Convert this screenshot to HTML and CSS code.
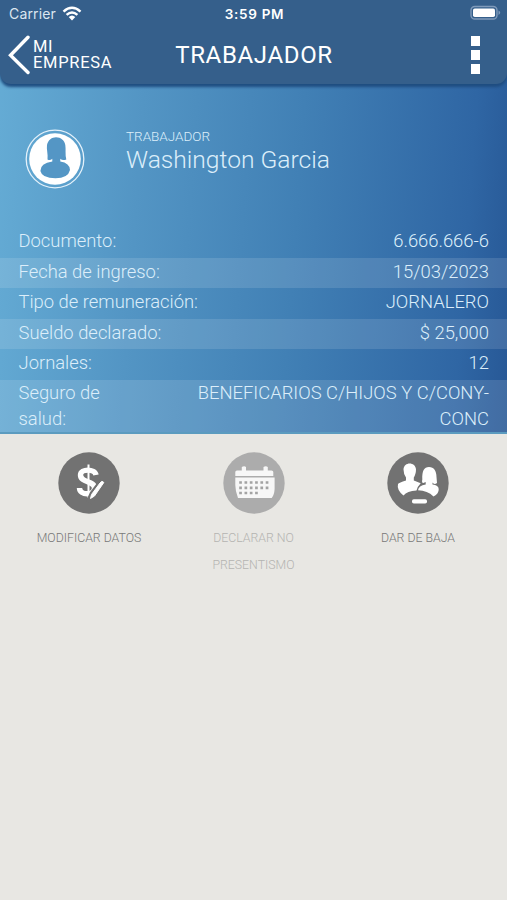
FILE: index.html
```html
<!DOCTYPE html>
<html lang="es">
<head>
<meta charset="utf-8">
<meta name="viewport" content="width=device-width, initial-scale=1">
<title>Trabajador</title>
<link rel="stylesheet" href="styles.css">
</head>
<body>
<div class="top">
<header class="appbar">
  <div class="status">
    <div class="network"><span class="carrier">Carrier</span>
      <svg class="wifi" width="20" height="15" viewBox="0 0 20 15"><g fill="none" stroke="#fff" stroke-width="2.5"><path d="M1.5 5.6Q10-2 18.500 5.600"/><path d="M4.600 8.900Q10 4 15.400 8.900"/></g><path d="M6.700 11.100Q10 8 13.300 11.100L10 14.500Z" fill="#fff"/></svg>
    </div>
    <time class="clock">3:59 PM</time>
    <svg class="battery" width="32" height="16" viewBox="0 0 32 16"><rect x="1" y="1.500" width="26" height="12.500" rx="3.800" fill="none" stroke="#7f9aba" stroke-width="1.400"/><rect x="3" y="3.500" width="22" height="8.500" rx="1.800" fill="#fff"/><path d="M28.500 5.500Q32 7.700 28.500 10Z" fill="#7f9aba"/></svg>
  </div>
  <nav class="nav">
    <a class="back"><svg width="22" height="40" viewBox="0 0 22 40"><path d="M20 2.300L2.500 20.300L20 37.500" fill="none" stroke="#fff" stroke-width="3.400" stroke-linecap="round"/></svg><span>MI<br>EMPRESA</span></a>
    <h1>TRABAJADOR</h1>
    <div class="more"><i></i><i></i><i></i></div>
  </nav>
</header>
<section class="panel">
  <div class="person">
    <svg class="avatar" width="60" height="60" viewBox="0 0 60 60"><circle cx="30" cy="30" r="28.800" fill="none" stroke="#e4f1fa" stroke-width="1.300"/><circle cx="30" cy="30" r="25.800" fill="#fff"/><path d="M22.500 30.500C23.200 25 21.300 20 22 16C23 11 27 8.300 31 8.300C36 8.300 39.500 11.500 40.300 16C41 20 40 26 41.300 30.500Q37.500 31.800 35.300 29.800V32.500Q44.800 34 45 41Q43 49.300 30.500 49.300Q17 49.300 15.400 42Q15.300 34 27.300 32.500V29.800Q25 31.800 22.500 30.500Z" fill="#5496c5"/></svg>
    <div class="identity"><p class="role">TRABAJADOR</p><p class="name">Washington Garcia</p></div>
  </div>
  <dl class="details">
    <div><dt>Documento:</dt><dd>6.666.666-6</dd></div>
    <div><dt>Fecha de ingreso:</dt><dd>15/03/2023</dd></div>
    <div><dt>Tipo de remuneración:</dt><dd>JORNALERO</dd></div>
    <div><dt>Sueldo declarado:</dt><dd>$ 25,000</dd></div>
    <div><dt>Jornales:</dt><dd>12</dd></div>
    <div><dt>Seguro de<br>salud:</dt><dd>BENEFICARIOS C/HIJOS Y C/CONY-<br>CONC</dd></div>
  </dl>
</section>
</div>
<main class="actions">
  <div class="action">
    <svg width="62" height="62" viewBox="0 0 62 62"><circle cx="31" cy="31" r="30.700" fill="#727272"/><path d="M38 23C37 16.500 22.500 16.500 22.500 23C22.500 31 36.500 28.500 36.500 36C36.500 44 21.500 43.500 21.500 36" fill="none" stroke="#fff" stroke-width="5.400"/><path d="M30.500 12.500V46" stroke="#fff" stroke-width="2"/><path d="M45 29L35 42L31 51" fill="none" stroke="#727272" stroke-width="7"/><path d="M42 31Q44 28 45.800 30.500L36.500 44L32.500 46.500L33.500 42.500Z" fill="#fff" stroke="#fff"/></svg>
    <p>MODIFICAR DATOS</p>
  </div>
  <div class="action disabled">
    <svg width="62" height="62" viewBox="0 0 62 62"><circle cx="31" cy="31" r="30.700" fill="#acacac"/><path d="M12.300 24V20Q12.300 18.500 14 18.500H18.800V15Q21.300 13.500 23 15V18.500H40.500V15Q42.800 13.500 44.800 15V18.500H48.500Q50.300 18.500 50.300 20V24ZM12.300 25.600H51.600V37Q51.300 43 48.700 46H15Q12.300 39 12.300 33Z" fill="#f7f7f7"/><g stroke="#a3a3a3" stroke-width="2.700" stroke-dasharray="2.700 2.600"><path d="M16.200 30.500H45.500M16.200 35.800H45.500M16.200 41H35"/></g></svg>
    <p>DECLARAR NO<br>PRESENTISMO</p>
  </div>
  <div class="action">
    <svg width="62" height="62" viewBox="0 0 62 62"><circle cx="31" cy="31" r="30.700" fill="#727272"/><path d="M16.500 17.500C16.800 9.500 28.500 9.500 29 17.500C29 21 28 23.500 26.800 25.500V28.500L33.700 31.200Q30 35 29.500 38.500Q20 39 16.500 43.500Q9.500 38 11 32Q12 30.500 19 28.500V25.500Q16.500 22 16.500 17.500Z" fill="#fff"/><path d="M36.300 31Q34.500 31 35.300 27.500C35 19 37 15 42 15C47 15 49.500 19 49.500 25L50 31Q47 33 45.500 30.500V32.500Q51.500 33.200 51.700 37Q52 41.500 46.500 44.500Q40.500 38.500 31 38.300Q31.500 33.500 38.700 32.500V30Z" fill="#fff"/><rect x="25" y="47.200" width="15" height="4.300" rx="1.800" fill="#fff"/></svg>
    <p>DAR DE BAJA</p>
  </div>
</main>
</body>
</html>
```
FILE: styles.css
```css
* { box-sizing: border-box; }
body { margin: 0; min-height: 900px; background: #e8e7e3; font-family: Roboto, sans-serif; font-weight: 300; }
p, h1, dl, dt, dd { margin: 0; }
svg { display: block; flex: none; }
.top { background: linear-gradient(94deg, #65acd5 0%, #5395c4 28%, #4180b5 58%, #2f66a4 90%, #275896 100%); border-bottom: 2px solid #5b9bbf; height: 434px; }
.appbar { height: 84px; background: #355f8b; border-radius: 0 0 11px 11px; box-shadow: 0 3px 3px #1f4d80; color: #fff; }
.status { height: 28px; display: grid; grid-template-columns: 1fr 1fr 1fr; align-items: center; padding: 0 5px 0 9px; }
.network { display: flex; align-items: center; gap: 6px; }
.carrier { font-family: Inter, sans-serif; font-size: 14px; font-weight: 400; line-height: 16px; margin-top: -1px; letter-spacing: .15px; color: #dce6f0; }
.wifi { margin-top: -2px; }
.clock { font: 600 13.500px/16px Inter, sans-serif; text-align: center; letter-spacing: .7px; margin-left: -2px; }
.battery { justify-self: end; margin-top: -2px; }
.nav { height: 54px; display: grid; grid-template-columns: 156px 196px 1fr; align-items: center; }
.back { display: flex; align-items: center; padding-left: 8px; gap: 3px; font-size: 16.500px; line-height: 16px; font-weight: 400; letter-spacing: .7px; }
h1 { font-size: 24px; font-weight: 400; letter-spacing: .65px; text-align: center; }
.more { display: grid; gap: 4px; justify-self: end; margin-right: 27px; }
.more i { width: 9px; height: 10px; background: #fff; }
.panel { color: #dceefa; }
.person { height: 143px; padding: 46px 24px 0 25px; display: flex; gap: 41px; }
.avatar { margin-top: -1px; }
.role { font-size: 13.500px; line-height: 15px; }
.name { font-size: 24.600px; line-height: 31px; }
.identity { margin-top: -1px; }
.details { font-size: 18.400px; line-height: 27px; }
.details div { height: 30.600px; padding: 0 18px; display: flex; justify-content: space-between; }
.details div:nth-child(even) { background: #ffffff1f; }
.details div:last-child { height: 52px; line-height: 26px; }
.details dt { padding-left: .5px; }
.details dd { text-align: right; }
.actions { display: grid; grid-template-columns: repeat(3, 164.500px); justify-content: center; padding-top: 18px; }
.action { display: flex; flex-direction: column; align-items: center; color: #777; }
.action p { font-size: 12.300px; line-height: 27px; text-align: center; margin-top: 11px; }
.disabled { color: #b4b4b1; }
```
